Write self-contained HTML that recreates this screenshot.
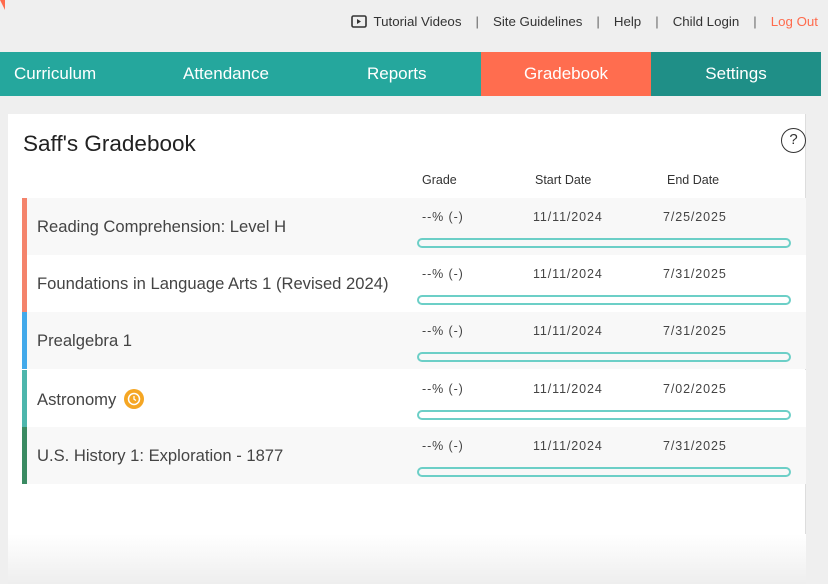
<!DOCTYPE html>
<html><head><style>
*{margin:0;padding:0;box-sizing:border-box}
body{width:828px;height:575px;overflow:hidden;background:#efefef;font-family:"Liberation Sans",sans-serif;color:#444;position:relative}
.top{position:absolute;top:14px;right:10px;font-size:13.3px;color:#333;display:flex;align-items:center}
.sep{color:#666;margin:0 14px}
.nav{position:absolute;top:52px;left:0;width:821px;height:44px;color:#fff;font-size:17px}
.nav div{position:absolute;top:0;height:44px;line-height:44px}
.nav span{position:absolute;top:0}
.card{position:absolute;top:114px;left:8px;width:798px;height:470px;background:#fff;border-right:1px solid #ddd}
h1{position:absolute;left:15px;top:17px;font-size:22.5px;font-weight:normal;color:#222}
.help{position:absolute;left:773px;top:14px;width:25px;height:25px;border:1.5px solid #333;border-radius:50%;text-align:center;font-size:15px;line-height:22px;color:#333}
.hd{position:absolute;top:59px;font-size:12.5px;color:#333}
.row{position:absolute;left:14px;width:784px;height:57px;border-left:5px solid}
.row .t{position:absolute;left:10px;top:19px;font-size:16.6px;color:#444}
.row .g{position:absolute;top:12px;font-size:12.5px;color:#444;letter-spacing:0.9px}
.bar{position:absolute;left:390px;top:40px;width:374px;height:10px;border:2px solid #6ccfc7;border-radius:6px}
</style></head><body>
<div style="position:absolute;left:0;top:0;width:0;height:0;border-left:5px solid transparent;border-top:10px solid #ff6b4d"></div>
<div class="top">
<svg width="16" height="13" viewBox="0 0 16 13" style="margin-right:7px"><rect x="1" y="1" width="14" height="11" rx="1.5" fill="none" stroke="#333" stroke-width="1.6"/><path d="M6 4l4 2.5-4 2.5z" fill="#333"/></svg>
<span>Tutorial Videos</span><span class="sep">|</span><span>Site Guidelines</span><span class="sep">|</span><span>Help</span><span class="sep">|</span><span>Child Login</span><span class="sep">|</span><span style="color:#ff6b4d">Log Out</span></div>
<div class="nav">
<div style="left:0;width:481px;background:#25a79d"><span style="left:14px">Curriculum</span><span style="left:183px">Attendance</span><span style="left:367px">Reports</span></div>
<div style="left:481px;width:170px;background:#ff6d4f;text-align:center">Gradebook</div>
<div style="left:651px;width:170px;background:#1f8f87;text-align:center">Settings</div>
</div>
<div class="card">
<h1>Saff's Gradebook</h1>
<div class="help">?</div>
<div class="hd" style="left:414px">Grade</div>
<div class="hd" style="left:527px">Start Date</div>
<div class="hd" style="left:659px">End Date</div>

<div class="row" style="top:84px;background:#f8f8f8;border-color:#f4836b"><div class="t">Reading Comprehension: Level H</div><div class="g" style="left:395px">--% (-)</div><div class="g" style="left:506px">11/11/2024</div><div class="g" style="left:636px">7/25/2025</div><div class="bar"></div></div>
<div class="row" style="top:141px;background:#fff;border-color:#f4836b"><div class="t">Foundations in Language Arts 1 (Revised 2024)</div><div class="g" style="left:395px">--% (-)</div><div class="g" style="left:506px">11/11/2024</div><div class="g" style="left:636px">7/31/2025</div><div class="bar"></div></div>
<div class="row" style="top:198px;background:#f8f8f8;border-color:#42a9ea"><div class="t">Prealgebra 1</div><div class="g" style="left:395px">--% (-)</div><div class="g" style="left:506px">11/11/2024</div><div class="g" style="left:636px">7/31/2025</div><div class="bar"></div></div>
<div class="row" style="top:256px;background:#fff;border-color:#4db6ac"><div class="t">Astronomy <span style="display:inline-block;width:20px;height:20px;border-radius:50%;background:#f5a623;vertical-align:-4px;margin-left:3px;position:relative"><svg width="20" height="20" viewBox="0 0 20 20" style="position:absolute;left:0;top:0"><circle cx="10" cy="10" r="5.5" fill="none" stroke="#fff" stroke-width="1.5"/><path d="M10 7v3.2l2 1.3" fill="none" stroke="#fff" stroke-width="1.3"/></svg></span></div><div class="g" style="left:395px">--% (-)</div><div class="g" style="left:506px">11/11/2024</div><div class="g" style="left:636px">7/02/2025</div><div class="bar"></div></div>
<div class="row" style="top:313px;background:#f8f8f8;border-color:#3a8a62"><div class="t">U.S. History 1: Exploration - 1877</div><div class="g" style="left:395px">--% (-)</div><div class="g" style="left:506px">11/11/2024</div><div class="g" style="left:636px">7/31/2025</div><div class="bar"></div></div>
<div style="position:absolute;left:0;top:420px;width:798px;height:50px;background:linear-gradient(#fff,#eee)"></div>
</div>
</body></html>
